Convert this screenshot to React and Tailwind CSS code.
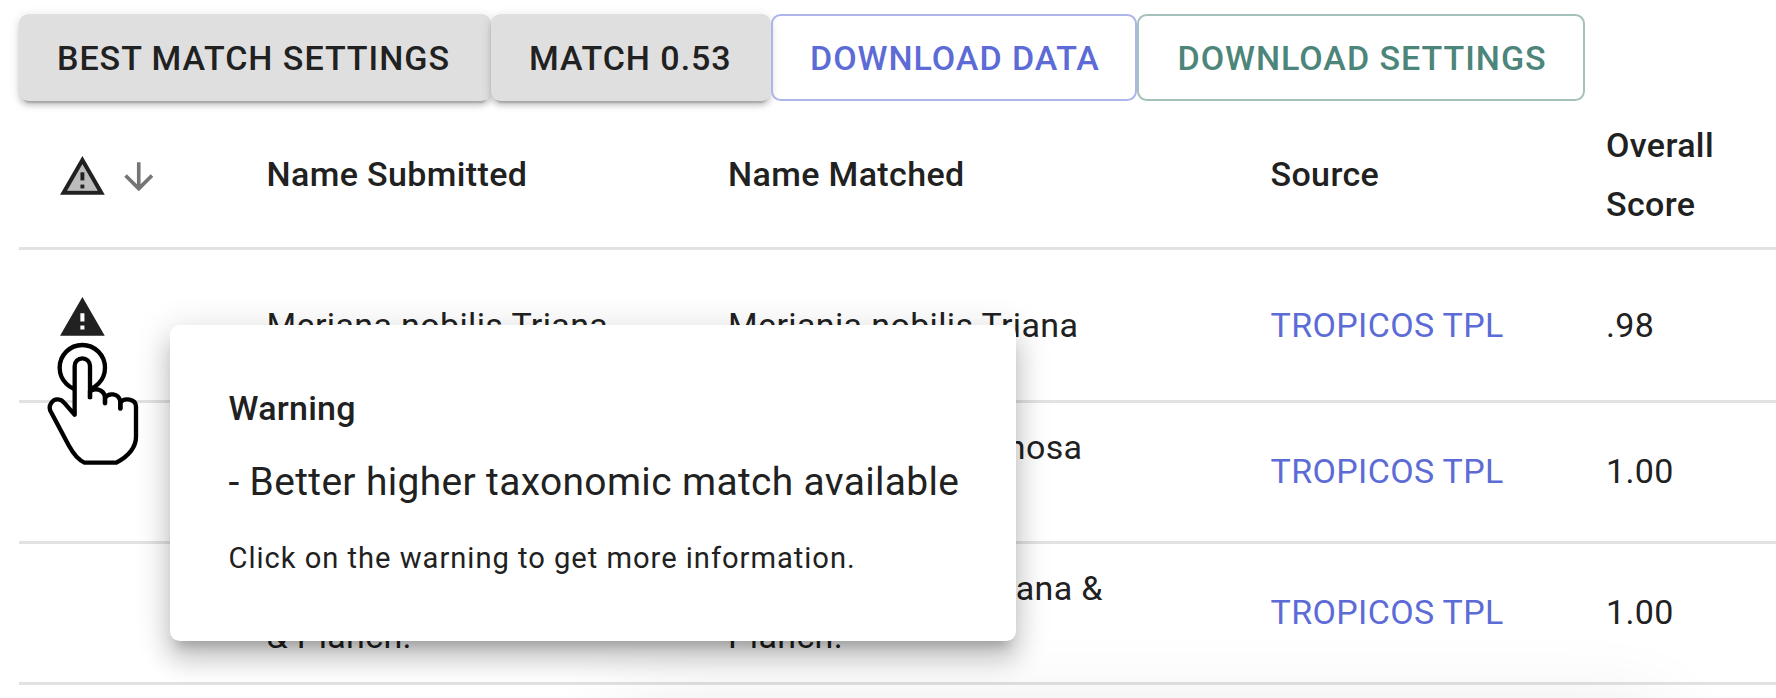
const SANS = "font-['Roboto','Noto_Sans',sans-serif]";

function WarningTwoTone() {
  return (
    <svg viewBox="0 0 24 24" className="size-[48.8px] shrink-0" fill="#212121">
      <path opacity=".3" d="M4.47 19h15.06L12 5.99 4.47 19zM13 18h-2v-2h2v2zm0-4h-2v-4h2v4z" />
      <path d="M1 21h22L12 2 1 21zm3.47-2L12 5.99 19.53 19H4.47zM11 16h2v2h-2zm0-6h2v4h-2z" />
    </svg>
  );
}

function Warning() {
  return (
    <svg viewBox="0 0 24 24" className="size-[48.8px] shrink-0" fill="#212121">
      <path d="M1 21h22L12 2 1 21zm12-3h-2v-2h2v2zm0-4h-2v-4h2v4z" />
    </svg>
  );
}

function ArrowDown() {
  return (
    <svg viewBox="0 0 24 24" className="size-[43.5px] shrink-0" fill="#757575">
      <path d="M20 12l-1.41-1.41L13 16.17V4h-2v12.17l-5.58-5.59L4 12l8 8 8-8z" />
    </svg>
  );
}

function Pointer() {
  return (
    <svg
      viewBox="78 186 282 372"
      className="absolute left-[46px] top-[342px] z-20 h-[124px] w-[94px]"
      fill="none"
      stroke="#000"
      strokeWidth="13"
      strokeLinejoin="round"
    >
      <circle cx="187" cy="263" r="68" fill="#fff" />
      <path
        fill="#fff"
        d="M164 404V258a23 23 0 0 1 46 0V352V334C222 323 250 326 255 350V370V354C264 338 296 338 301 364V386V368C312 352 348 356 348 380V470C348 508 318 532 289 548H194C172 540 158 518 146 496L95 400C80 378 98 350 124 361C134 368 142 380 164 404Z"
      />
      <path d="M210 332V357M255 348V372M301 362V388" />
    </svg>
  );
}

const BUTTONS = [
  { label: "BEST MATCH SETTINGS", look: "w-[472px] pl-[38px] bg-[#dfdfdf] text-[#212121] shadow-[0_7px_2px_-5px_rgba(0,0,0,0.2),0_5px_5px_0_rgba(0,0,0,0.14),0_2px_12px_0_rgba(0,0,0,0.12)]" },
  { label: "MATCH 0.53", look: "w-[280px] pl-[38px] bg-[#dfdfdf] text-[#212121] shadow-[0_7px_2px_-5px_rgba(0,0,0,0.2),0_5px_5px_0_rgba(0,0,0,0.14),0_2px_12px_0_rgba(0,0,0,0.12)]" },
  { label: "DOWNLOAD DATA", look: "w-[366px] pl-[37px] border-2 border-[#adb5ea] text-[#5c6bd6]" },
  { label: "DOWNLOAD SETTINGS", look: "w-[448px] pl-[38.5px] border-2 border-[#a5c1bb] text-[#4c8579]" },
];

const ROWS = [
  { warn: true, height: "h-[153px]", submitted: ["Meriana nobilis Triana"], matched: ["Meriania nobilis Triana"], score: ".98" },
  { warn: false, height: "h-[141px] pb-[2px]", submitted: ["Monochaetum spinosa", "(Aubl.) DC."], matched: ["Monochaetum spinosa", "(Aubl.) DC."], score: "1.00" },
  { warn: false, height: "h-[141px] pb-[2px]", submitted: ["Clusia laurifolia Triana", "& Planch."], matched: ["Clusia laurifolia Triana &", "Planch."], score: "1.00" },
];

const GRID = "grid grid-cols-[209.5px_461.5px_542.5px_335.5px_1fr] items-center border-b-3 border-[#e2e2e2]";

function Lines({ lines }) {
  return (
    <div className="pl-[38px] leading-[48.4px] whitespace-nowrap">
      {lines.map((l) => (
        <div key={l}>{l}</div>
      ))}
    </div>
  );
}

export default function App() {
  return (
    <div className={`relative h-[698px] w-[1776px] overflow-hidden bg-white pt-[14px] pl-[19px] text-[#212121] ${SANS}`}>
      <div className="flex h-[87px]">
        {BUTTONS.map((b) => (
          <button
            key={b.label}
            className={`flex items-center justify-start rounded-[9.7px] pt-[1px] text-[34px] font-medium tracking-[0.02857em] whitespace-nowrap ${b.look}`}
          >
            {b.label}
          </button>
        ))}
      </div>

      <div className="text-[34px] tracking-[0.01071em]">
        <div className={`${GRID} h-[149px] font-medium`}>
          <div className="flex items-center gap-[10px] pt-[5.5px] pl-[39.2px]">
            <WarningTwoTone />
            <ArrowDown />
          </div>
          <div className="pl-[38px]">Name Submitted</div>
          <div className="pl-[38px]">Name Matched</div>
          <div className="pl-[38px]">Source</div>
          <div className="pt-[1px] pl-[38px] leading-[59px]">
            Overall
            <br />
            Score
          </div>
        </div>
        {ROWS.map((r, i) => (
          <div key={i} className={`${GRID} ${r.height}`}>
            <div className="pb-[15px] pl-[39.2px]">{r.warn && <Warning />}</div>
            <Lines lines={r.submitted} />
            <Lines lines={r.matched} />
            <div className="pl-[38px] leading-[48.4px] text-[#5c6bd6]">TROPICOS TPL</div>
            <div className="pl-[38px] leading-[48.4px]">{r.score}</div>
          </div>
        ))}
      </div>

      <div className="absolute top-[720px] left-[620px] h-[100px] w-[1040px] shadow-[0_0_90px_0_rgba(0,0,0,0.12)]" />

      <div className="absolute top-[325px] left-[170px] z-10 h-[316px] w-[846px] rounded-[9.7px] bg-white pl-[58.5px] whitespace-nowrap shadow-[0_12px_12px_-7px_rgba(0,0,0,0.2),0_19px_24px_2px_rgba(0,0,0,0.14),0_7px_34px_5px_rgba(0,0,0,0.12)]">
        <div className="pt-[57px] text-[34px] leading-[53px] font-medium tracking-[0.00714em]">Warning</div>
        <div className="pt-[18px] text-[38.9px] leading-[58px] tracking-[0.00938em]">- Better higher taxonomic match available</div>
        <div className="pt-[23px] text-[29.15px] leading-[48px] tracking-[0.03333em]">Click on the warning to get more information.</div>
      </div>

      <Pointer />
    </div>
  );
}
